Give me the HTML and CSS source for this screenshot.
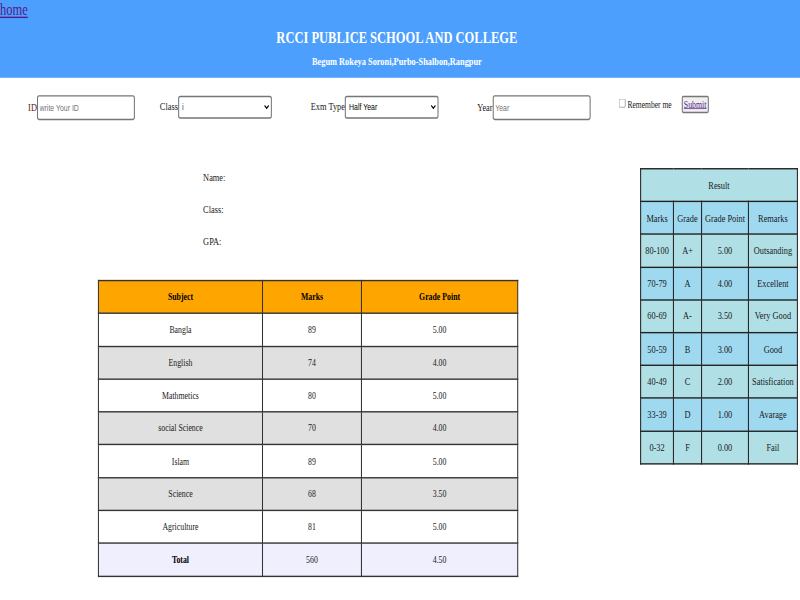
FILE: index.html
```html
<!DOCTYPE html>
<html lang="en">
<head>
<meta charset="utf-8">
<title>RCCI Result</title>
<link rel="stylesheet" href="styles.css">
</head>
<body>
<div class="viewport">
<div class="page">
  <header class="banner">
    <a class="home" href="#">home</a>
    <h2 class="title">RCCI PUBLICE SCHOOL AND COLLEGE</h2>
    <h4 class="subtitle">Begum Rokeya Soroni,Purbo-Shalbon,Rangpur</h4>
  </header>

  <form class="search">
    <div class="field"><label class="lbl lbl-id">ID</label><input class="txt" type="text" placeholder="write Your ID"></div>
    <div class="field field-class"><label class="lbl">Class</label><select class="sel"><option>i</option></select></div>
    <div class="field field-exam"><label class="lbl">Exm Type</label><select class="sel"><option>Half Year</option></select></div>
    <div class="field field-year"><label class="lbl">Year</label><input class="txt" type="text" placeholder="Year"></div>
    <div class="remember">
      <input class="chk" type="checkbox">
      <span class="rem-text">Remember me</span>
      <button class="submit" type="button"><a href="#">Submit</a></button>
    </div>
  </form>

  <main class="content">
    <section class="student">
      <div class="info">
        <div class="info-row">Name:</div>
        <div class="info-row">Class:</div>
        <div class="info-row">GPA:</div>
      </div>
      <table class="marks">
        <colgroup><col class="c-sub"><col class="c-mark"><col class="c-gp"></colgroup>
        <tr class="head"><th>Subject</th><th>Marks</th><th>Grade Point</th></tr>
        <tr class="odd"><td>Bangla</td><td>89</td><td>5.00</td></tr>
        <tr class="even"><td>English</td><td>74</td><td>4.00</td></tr>
        <tr class="odd"><td>Mathmetics</td><td>80</td><td>5.00</td></tr>
        <tr class="even"><td>social Science</td><td>70</td><td>4.00</td></tr>
        <tr class="odd"><td>Islam</td><td>89</td><td>5.00</td></tr>
        <tr class="even"><td>Science</td><td>68</td><td>3.50</td></tr>
        <tr class="odd"><td>Agriculture</td><td>81</td><td>5.00</td></tr>
        <tr class="total"><th>Total</th><td>560</td><td>4.50</td></tr>
      </table>
    </section>

    <aside class="scale">
      <table class="grades">
        <colgroup><col class="g-m"><col class="g-g"><col class="g-p"><col class="g-r"></colgroup>
        <tr class="pb"><td colspan="4">Result</td></tr>
        <tr class="sb"><td>Marks</td><td>Grade</td><td>Grade Point</td><td>Remarks</td></tr>
        <tr class="pb"><td>80-100</td><td>A+</td><td>5.00</td><td>Outsanding</td></tr>
        <tr class="sb"><td>70-79</td><td>A</td><td>4.00</td><td>Excellent</td></tr>
        <tr class="pb"><td>60-69</td><td>A-</td><td>3.50</td><td>Very Good</td></tr>
        <tr class="sb"><td>50-59</td><td>B</td><td>3.00</td><td>Good</td></tr>
        <tr class="pb"><td>40-49</td><td>C</td><td>2.00</td><td>Satisfication</td></tr>
        <tr class="sb"><td>33-39</td><td>D</td><td>1.00</td><td>Avarage</td></tr>
        <tr class="pb"><td>0-32</td><td>F</td><td>0.00</td><td>Fail</td></tr>
      </table>
    </aside>
  </main>
</div>
</div>
</body>
</html>
```

FILE: styles.css
```css
html, body {
  margin: 0;
  padding: 0;
  background: #ffffff;
  overflow: hidden;
}

body {
  font-family: "Liberation Serif", "Times New Roman", serif;
  color: #1a1a1a;
}

.viewport {
  width: 800px;
  height: 600px;
  overflow: hidden;
}

/* the original page was laid out at 1536x864 and shown squeezed into 800x600 */
.page {
  width: 1536px;
  height: 864px;
  transform: scale(0.520833, 0.694444);
  transform-origin: 0 0;
}

/* ---------- banner ---------- */
.banner {
  background: #4d9ffd;
  height: 112px;
  box-sizing: border-box;
  padding-right: 12px;
}

.home {
  display: block;
  width: max-content;
  font-size: 24px;
  line-height: 28px;
  color: #551a8b;
}

.title {
  margin: 12px 0 0;
  font-size: 24px;
  line-height: 28px;
  font-weight: bold;
  color: #ffffff;
  text-align: center;
}

.subtitle {
  margin: 10px 0 0;
  font-size: 16px;
  line-height: 20px;
  font-weight: bold;
  color: #ffffff;
  text-align: center;
}

/* ---------- search form ---------- */
.search {
  display: flex;
  align-items: flex-start;
  margin: 25px 0 0;
  padding-left: 54px;
  height: 36px;
}

.field {
  display: flex;
  align-items: baseline;
}

.field-class { margin-left: 48px; }
.field-exam { margin-left: 75px; }
.field-year { margin-left: 74px; }

.lbl {
  font-size: 16px;
  color: #1a1a1a;
}

.lbl-id { color: #5c1515; }

.txt {
  width: 188px;
  height: 36px;
  box-sizing: border-box;
  margin: 0;
  padding: 0 3px;
  border: 2px solid #767676;
  border-radius: 4px;
  font: 13.33px "Liberation Sans", Arial, sans-serif;
  color: #000;
  background: #fff;
}

.txt::placeholder { color: #757575; }

.sel {
  width: 180px;
  height: 33px;
  box-sizing: border-box;
  margin: 1px 0 0;
  padding: 0 2px;
  border: 2px solid #767676;
  border-radius: 4px;
  font: 13.33px "Liberation Sans", Arial, sans-serif;
  color: #000;
  background: #fff;
}

.remember {
  display: flex;
  align-items: center;
  margin: 1px 0 0 54px;
}

.chk {
  width: 13px;
  height: 13px;
  margin: 0 4px 4px 0;
}

.rem-text {
  font-size: 14.5px;
  color: #1a1a1a;
}

.submit {
  margin-left: 19px;
  width: 52px;
  height: 25px;
  padding: 0;
  border: 2px solid #767676;
  border-radius: 3px;
  background: #efefef;
  font: 15px "Liberation Serif", "Times New Roman", serif;
}

.submit a { color: #551a8b; }

/* ---------- content ---------- */
.content {
  display: flex;
  align-items: flex-start;
  margin-top: 60px;
}

.student {
  margin-left: 188px;
  width: 805px;
}

.info { margin-left: 202px; }

.info-row {
  font-size: 16px;
  line-height: 46px;
  color: #1a1a1a;
}

.marks {
  margin-top: 32px;
  width: 805px;
  border-collapse: collapse;
  table-layout: fixed;
  font-size: 15px;
}

.c-sub { width: 315px; }
.c-mark { width: 190px; }
.c-gp { width: 300px; }

.marks th,
.marks td {
  border: 2px solid #333;
  height: 45.3px;
  padding: 0;
  text-align: center;
  color: #1a1a1a;
}

.marks th { color: #000; font-weight: bold; }

.marks .head { background: #ffa500; }
.marks .odd { background: #ffffff; }
.marks .even { background: #e0e0e0; }
.marks .total { background: #efeffd; }

.scale {
  margin-left: 236px;
  margin-top: 9px;
}

.grades {
  width: 301px;
  border-collapse: collapse;
  table-layout: fixed;
  font-size: 16px;
}

.g-m { width: 63px; }
.g-g { width: 54px; }
.g-p { width: 90px; }
.g-r { width: 94px; }

.grades td {
  border: 2px solid #222;
  height: 45.2px;
  padding: 0;
  text-align: center;
  white-space: nowrap;
  color: #1a1a1a;
}

.grades .pb { background: #b0e0e6; }
.grades .sb { background: #9fd9f0; }
```
